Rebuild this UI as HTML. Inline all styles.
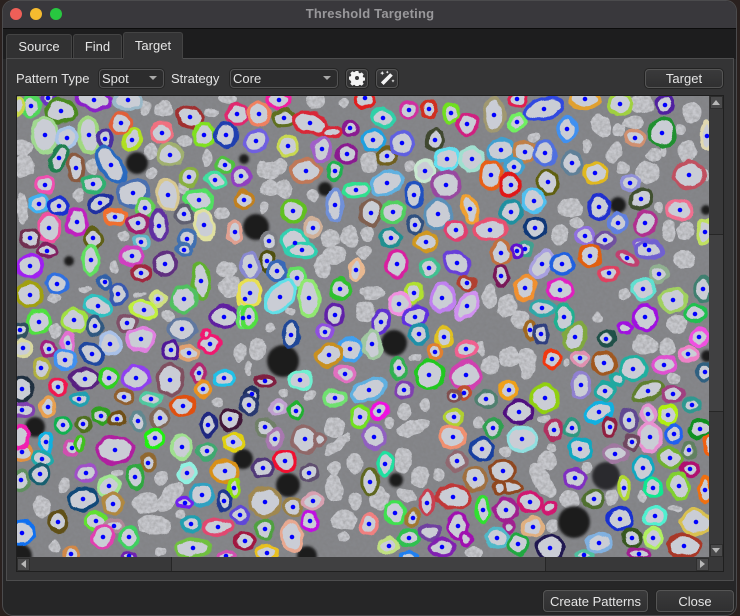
<!DOCTYPE html>
<html><head><meta charset="utf-8"><title>Threshold Targeting</title>
<style>
*{box-sizing:border-box}
html,body{margin:0;padding:0;width:740px;height:616px;overflow:hidden;background:#2a211f;font-family:"Liberation Sans",sans-serif;color:#e2e2e2;font-size:13px}
.a{position:absolute}
#win{left:2px;top:0;width:735px;height:616px;border-radius:11px;background:#262627;border:1px solid #4b4b4d;overflow:hidden}
#tb{left:3px;top:1px;width:733px;height:28px;background:#39383c;border-radius:10px 10px 0 0;border-bottom:1px solid #0c0c0c}
#title{left:0;top:6px;width:740px;text-align:center;font-weight:bold;color:#99989b;font-size:13px;letter-spacing:.2px}
.dot{width:12px;height:12px;border-radius:50%;top:8px}
#strip{left:3px;top:29px;width:733px;height:30px;background:#1d1d1e}
.tab{background:#313132;border:1px solid #444;border-bottom:none;border-radius:3px 3px 0 0;text-align:center;top:34px;height:24px;line-height:24px;font-size:13px;color:#e6e6e6}
#panel{left:6px;top:58px;width:728px;height:523px;background:#343435;border:1px solid #4d4d4e}
.btn{background:linear-gradient(#3a3a3b,#303031);border:1px solid #555;border-radius:4px;text-align:center;color:#e6e6e6;box-shadow:0 0 0 1px #232323}
.combo{background:#2c2c2d;border:1px solid #525253;border-radius:4px;height:19px;line-height:17px;top:69px;padding-left:2px;box-shadow:0 0 0 1px #262626}
.arr{position:absolute;right:6px;top:6px;width:0;height:0;border-left:4px solid transparent;border-right:4px solid transparent;border-top:4px solid #a9a9a9}
.lbl{top:70px;line-height:17px}
.sb{background:#383839}
.sbb{background:#4a4a4b;border:1px solid #2e2e2e}
</style></head><body>
<div class="a" id="win"></div>
<div class="a" id="tb"></div>
<div class="a" id="title">Threshold Targeting</div>
<div class="a dot" style="left:10px;background:#ee5f58"></div>
<div class="a dot" style="left:30px;background:#f5bb2f"></div>
<div class="a dot" style="left:50px;background:#28c840"></div>
<div class="a" id="strip"></div>
<div class="a" id="panel"></div>
<div class="a tab" style="left:6px;width:66px">Source</div>
<div class="a tab" style="left:73px;width:49px">Find</div>
<div class="a tab" style="left:123px;width:60px;top:32px;height:27px;background:#343435;border-bottom:1px solid #343435;line-height:26px">Target</div>

<div class="a lbl" style="left:16px">Pattern Type</div>
<div class="a combo" style="left:99px;width:65px">Spot<span class="arr"></span></div>
<div class="a lbl" style="left:171px">Strategy</div>
<div class="a combo" style="left:230px;width:108px">Core<span class="arr"></span></div>
<div class="a btn" style="left:346px;top:69px;width:22px;height:19px"></div>
<svg class="a" style="left:349px;top:70px" width="16" height="16" viewBox="0 0 16 16"><path fill="#f4f4f4" fill-rule="evenodd" d="M6.6 1h2.8l.4 1.9 1.2.5 1.7-1 2 2-1 1.7.5 1.2 1.900.4v2.800l-1.900.4-.5 1.200 1 1.700-2 2-1.700-1-1.200.5-.4 1.900H6.600l-.4-1.900-1.200-.5-1.700 1-2-2 1-1.700-.5-1.200L0 9.400V6.600l1.800-.4.5-1.200-1-1.700 2-2 1.700 1 1.200-.5zM8 6a2 2 0 1 0 0 4 2 2 0 0 0 0-4z"/></svg>
<div class="a btn" style="left:376px;top:69px;width:22px;height:19px"></div>
<svg class="a" style="left:379px;top:70px" width="16" height="16" viewBox="0 0 16 16"><path fill="#f4f4f4" d="M11.200 3.200l2.600 2.400L4.600 15 1.900 12.400zM3.200 1l.7 1.500 1.500.6-1.500.6-.7 1.500-.6-1.500-1.500-.6 1.500-.6zM8.300.6l.5 1 1 .5-1 .5-.5 1-.5-1-1-.5 1-.5zM14 9.300l.5 1.100 1.100.5-1.100.5-.5 1.100-.5-1.100-1.100-.5 1.100-.5z"/></svg>
<div class="a btn" style="left:645px;top:69px;width:78px;height:19px;line-height:17px">Target</div>

<svg class="a" style="left:17px;top:96px" width="692" height="461" viewBox="17 96 692 461">
<defs>
<filter id="w" x="-2%" y="-2%" width="104%" height="104%" color-interpolation-filters="sRGB"><feTurbulence type="fractalNoise" baseFrequency=".08" numOctaves="2" seed="4"/><feDisplacementMap in="SourceGraphic" scale="6" xChannelSelector="R" yChannelSelector="G"/></filter>
<filter id="g" x="0" y="0" width="100%" height="100%"><feTurbulence type="fractalNoise" baseFrequency=".3" numOctaves="2" seed="7"/><feColorMatrix values="0 0 0 0 .2 0 0 0 0 .2 0 0 0 0 .2 .7 0 0 0 -.22"/></filter>
<filter id="b"><feGaussianBlur stdDeviation="1.300"/></filter>
</defs>
<rect x="17" y="96" width="692" height="461" fill="#85868a"/>
<g filter="url(#w)" fill="#c8c9ce">
<ellipse cx="22" cy="148" rx="11" ry="9"/><ellipse cx="24" cy="166" rx="11" ry="11"/><ellipse cx="150" cy="151" rx="6" ry="9"/><ellipse cx="164" cy="109" rx="10" ry="9"/><ellipse cx="145" cy="108" rx="5" ry="8"/><ellipse cx="185" cy="141" rx="7" ry="6"/><ellipse cx="207" cy="158" rx="5" ry="9"/><ellipse cx="152" cy="174" rx="6" ry="6"/><ellipse cx="92" cy="166" rx="6" ry="8"/><ellipse cx="79" cy="195" rx="5" ry="7"/><ellipse cx="22" cy="209" rx="6" ry="16"/><ellipse cx="184" cy="188" rx="5" ry="6"/><ellipse cx="222" cy="213" rx="7" ry="6"/><ellipse cx="124" cy="236" rx="6" ry="6"/><ellipse cx="212" cy="113" rx="7" ry="5"/><ellipse cx="227" cy="99" rx="10" ry="5"/><ellipse cx="315" cy="101" rx="10" ry="9"/><ellipse cx="344" cy="103" rx="5" ry="5"/>
<ellipse cx="270" cy="171" rx="10" ry="9"/><ellipse cx="280" cy="166" rx="7" ry="8"/><ellipse cx="262" cy="169" rx="6" ry="8"/><ellipse cx="270" cy="188" rx="10" ry="8"/><ellipse cx="284" cy="189" rx="8" ry="10"/><ellipse cx="312" cy="195" rx="6" ry="6"/><ellipse cx="369" cy="163" rx="9" ry="11"/><ellipse cx="410" cy="166" rx="6" ry="6"/><ellipse cx="264" cy="208" rx="5" ry="6"/><ellipse cx="349" cy="236" rx="9" ry="11"/><ellipse cx="330" cy="239" rx="10" ry="8"/><ellipse cx="367" cy="234" rx="6" ry="7"/>
<ellipse cx="601" cy="125" rx="9" ry="12" transform="rotate(-25 601 125)"/><ellipse cx="619" cy="130" rx="7" ry="7"/><ellipse cx="634" cy="123" rx="11" ry="6"/><ellipse cx="642" cy="104" rx="12" ry="10"/><ellipse cx="692" cy="113" rx="10" ry="11"/><ellipse cx="681" cy="129" rx="5" ry="6"/><ellipse cx="687" cy="151" rx="10" ry="11"/><ellipse cx="664" cy="151" rx="4" ry="5"/><ellipse cx="615" cy="153" rx="7" ry="11" transform="rotate(20 615 153)"/><ellipse cx="654" cy="155" rx="8" ry="6"/><ellipse cx="587" cy="146" rx="5" ry="7"/><ellipse cx="534" cy="137" rx="6" ry="5"/><ellipse cx="623" cy="168" rx="6" ry="6"/><ellipse cx="647" cy="173" rx="13" ry="11"/><ellipse cx="705" cy="176" rx="3" ry="6"/><ellipse cx="659" cy="207" rx="5" ry="6"/><ellipse cx="570" cy="208" rx="13" ry="10"/><ellipse cx="577" cy="223" rx="7" ry="5"/><ellipse cx="560" cy="234" rx="9" ry="10"/><ellipse cx="669" cy="231" rx="7" ry="11"/><ellipse cx="685" cy="231" rx="8" ry="9"/>
<ellipse cx="227" cy="269" rx="11" ry="8"/><ellipse cx="230" cy="286" rx="11" ry="11"/><ellipse cx="114" cy="267" rx="5" ry="6"/><ellipse cx="85" cy="289" rx="6" ry="3"/><ellipse cx="54" cy="299" rx="7" ry="5"/><ellipse cx="140" cy="294" rx="7" ry="3"/><ellipse cx="167" cy="316" rx="7" ry="6"/><ellipse cx="55" cy="331" rx="6" ry="7"/><ellipse cx="240" cy="353" rx="7" ry="10"/>
<ellipse cx="334" cy="256" rx="12" ry="10"/><ellipse cx="322" cy="266" rx="8" ry="12"/><ellipse cx="364" cy="253" rx="8" ry="7"/><ellipse cx="372" cy="293" rx="13" ry="7"/><ellipse cx="365" cy="312" rx="10" ry="11"/><ellipse cx="290" cy="311" rx="5" ry="4"/><ellipse cx="270" cy="328" rx="5" ry="5"/><ellipse cx="257" cy="349" rx="8" ry="11"/><ellipse cx="249" cy="369" rx="3" ry="8"/><ellipse cx="415" cy="357" rx="6" ry="4"/><ellipse cx="284" cy="393" rx="5" ry="5"/><ellipse cx="310" cy="395" rx="6" ry="5"/>
<ellipse cx="490" cy="296" rx="7" ry="12"/><ellipse cx="507" cy="306" rx="10" ry="11"/><ellipse cx="520" cy="319" rx="9" ry="9"/><ellipse cx="684" cy="259" rx="11" ry="9"/><ellipse cx="597" cy="317" rx="5" ry="5"/><ellipse cx="625" cy="294" rx="5" ry="6"/><ellipse cx="677" cy="324" rx="10" ry="9"/><ellipse cx="644" cy="345" rx="13" ry="10"/><ellipse cx="667" cy="347" rx="9" ry="9"/><ellipse cx="509" cy="357" rx="11" ry="10"/><ellipse cx="527" cy="363" rx="9" ry="16"/><ellipse cx="490" cy="365" rx="9" ry="9"/><ellipse cx="567" cy="363" rx="3" ry="5"/><ellipse cx="480" cy="349" rx="4" ry="8"/><ellipse cx="674" cy="378" rx="6" ry="5"/>
<ellipse cx="335" cy="428" rx="10" ry="10"/><ellipse cx="337" cy="445" rx="17" ry="5" transform="rotate(-40 337 445)"/><ellipse cx="355" cy="463" rx="8" ry="10"/><ellipse cx="335" cy="468" rx="7" ry="7"/><ellipse cx="334" cy="488" rx="9" ry="14" transform="rotate(-10 334 488)"/><ellipse cx="355" cy="502" rx="7" ry="9"/><ellipse cx="344" cy="520" rx="12" ry="10"/><ellipse cx="344" cy="537" rx="6" ry="5"/><ellipse cx="170" cy="497" rx="9" ry="18" transform="rotate(40 170 497)"/><ellipse cx="145" cy="503" rx="13" ry="11"/><ellipse cx="155" cy="525" rx="17" ry="10"/><ellipse cx="42" cy="507" rx="9" ry="11"/><ellipse cx="162" cy="478" rx="6" ry="7"/><ellipse cx="64" cy="485" rx="6" ry="7"/><ellipse cx="55" cy="547" rx="6" ry="6"/><ellipse cx="117" cy="473" rx="6" ry="4"/><ellipse cx="180" cy="515" rx="5" ry="4"/><ellipse cx="160" cy="552" rx="6" ry="5"/><ellipse cx="217" cy="403" rx="6" ry="5"/>
<ellipse cx="414" cy="427" rx="17" ry="8" transform="rotate(-20 414 427)"/><ellipse cx="404" cy="412" rx="7" ry="8"/><ellipse cx="390" cy="423" rx="5" ry="6"/><ellipse cx="425" cy="405" rx="5" ry="7"/><ellipse cx="479" cy="423" rx="6" ry="6"/><ellipse cx="505" cy="451" rx="6" ry="5"/><ellipse cx="403" cy="460" rx="9" ry="13"/><ellipse cx="420" cy="477" rx="9" ry="11"/><ellipse cx="439" cy="475" rx="6" ry="6"/><ellipse cx="379" cy="498" rx="10" ry="11"/><ellipse cx="406" cy="495" rx="11" ry="6" transform="rotate(20 406 495)"/><ellipse cx="542" cy="480" rx="9" ry="20" transform="rotate(-35 542 480)"/><ellipse cx="547" cy="460" rx="10" ry="9"/><ellipse cx="552" cy="447" rx="5" ry="5"/><ellipse cx="570" cy="499" rx="11" ry="9" transform="rotate(25 570 499)"/><ellipse cx="612" cy="497" rx="5" ry="8"/><ellipse cx="642" cy="497" rx="4" ry="6"/><ellipse cx="552" cy="526" rx="6" ry="6"/><ellipse cx="587" cy="468" rx="5" ry="6"/><ellipse cx="674" cy="508" rx="7" ry="3"/><ellipse cx="544" cy="418" rx="7" ry="4"/><ellipse cx="474" cy="553" rx="9" ry="6"/>
</g>
<rect x="17" y="96" width="692" height="461" filter="url(#g)"/>
<g filter="url(#b)" fill="#1d1d1f">
<circle cx="137" cy="163" r="11"/><circle cx="244" cy="159" r="5"/><circle cx="325" cy="189" r="7"/><circle cx="256" cy="227" r="13"/><circle cx="283" cy="361" r="16"/><circle cx="394" cy="343" r="13"/><circle cx="618" cy="205" r="8"/><circle cx="707" cy="356" r="6"/><circle cx="35" cy="427" r="10"/><circle cx="243" cy="459" r="10"/><circle cx="288" cy="485" r="12"/><circle cx="396" cy="480" r="7"/><circle cx="574" cy="522" r="16"/><circle cx="606" cy="476" r="14" fill="#2c2c2e"/><circle cx="69" cy="261" r="5"/><circle cx="20" cy="556" r="12"/><circle cx="307" cy="556" r="10"/><circle cx="706" cy="210" r="5"/>
</g>
<g filter="url(#w)" fill="#cacdd5" stroke-width="3.500">
<ellipse cx="31" cy="106" rx="8" ry="11" stroke="#4fd65a"/><ellipse cx="18" cy="106" rx="5" ry="8" stroke="#c9d94a"/><ellipse cx="48" cy="98" rx="7" ry="6" stroke="#6a35c0"/><ellipse cx="61" cy="111" rx="15" ry="11" stroke="#4a8a20"/><ellipse cx="94" cy="100" rx="18" ry="9" stroke="#8a22c8" transform="rotate(10 94 100)"/><ellipse cx="128" cy="100" rx="14" ry="9" stroke="#9ab8c8"/><ellipse cx="190" cy="117" rx="14" ry="10" stroke="#a03030" transform="rotate(20 190 117)"/><ellipse cx="237" cy="114" rx="10" ry="10" stroke="#e0286f"/><ellipse cx="45" cy="135" rx="13" ry="17" stroke="#a0d890"/><ellipse cx="89" cy="135" rx="10" ry="18" stroke="#a0d880" transform="rotate(-5 89 135)"/><ellipse cx="67" cy="138" rx="10" ry="10" stroke="#a8c4e8"/><ellipse cx="105" cy="139" rx="7" ry="10" stroke="#4a30a0"/><ellipse cx="121" cy="123" rx="10" ry="10" stroke="#e0603a"/><ellipse cx="132" cy="140" rx="8" ry="11" stroke="#b0e020" transform="rotate(20 132 140)"/><ellipse cx="162" cy="133" rx="10" ry="10" stroke="#f07080"/><ellipse cx="204" cy="135" rx="10" ry="11" stroke="#80e020"/><ellipse cx="226" cy="135" rx="11" ry="12" stroke="#2040b0"/><ellipse cx="59" cy="158" rx="7" ry="13" stroke="#208050" transform="rotate(30 59 158)"/><ellipse cx="111" cy="165" rx="10" ry="20" stroke="#2a6abf" transform="rotate(-35 111 165)"/><ellipse cx="76" cy="168" rx="8" ry="14" stroke="#8a5a40" transform="rotate(-5 76 168)"/><ellipse cx="170" cy="155" rx="13" ry="10" stroke="#a0b070"/><ellipse cx="225" cy="165" rx="8" ry="7" stroke="#50c040"/><ellipse cx="241" cy="176" rx="9" ry="10" stroke="#9040c0"/><ellipse cx="93" cy="184" rx="11" ry="8" stroke="#30b070"/><ellipse cx="45" cy="185" rx="9" ry="8" stroke="#f050b0"/><ellipse cx="133" cy="193" rx="16" ry="13" stroke="#4a70b0" transform="rotate(-30 133 193)"/><ellipse cx="189" cy="177" rx="8" ry="9" stroke="#88b040"/><ellipse cx="215" cy="180" rx="10" ry="7" stroke="#40e0a0" transform="rotate(20 215 180)"/><ellipse cx="168" cy="195" rx="11" ry="15" stroke="#d8c890" transform="rotate(-10 168 195)"/><ellipse cx="199" cy="200" rx="14" ry="10" stroke="#50e060" transform="rotate(15 199 200)"/><ellipse cx="244" cy="200" rx="9" ry="9" stroke="#c08020"/><ellipse cx="39" cy="204" rx="9" ry="8" stroke="#40b0f0"/><ellipse cx="59" cy="206" rx="10" ry="8" stroke="#1a30d0"/><ellipse cx="100" cy="203" rx="12" ry="8" stroke="#2030a0" transform="rotate(-20 100 203)"/><ellipse cx="145" cy="208" rx="9" ry="9" stroke="#60d050"/><ellipse cx="115" cy="217" rx="11" ry="7" stroke="#f07030"/><ellipse cx="77" cy="222" rx="10" ry="13" stroke="#c020c0"/><ellipse cx="184" cy="214" rx="8" ry="9" stroke="#606070"/><ellipse cx="138" cy="223" rx="11" ry="8" stroke="#a02070"/><ellipse cx="49" cy="228" rx="10" ry="14" stroke="#f050a0"/><ellipse cx="159" cy="226" rx="8" ry="15" stroke="#6030a0"/><ellipse cx="204" cy="225" rx="10" ry="14" stroke="#e0e0a0" transform="rotate(-20 204 225)"/><ellipse cx="235" cy="232" rx="8" ry="11" stroke="#e0a090"/><ellipse cx="30" cy="238" rx="10" ry="9" stroke="#703050"/><ellipse cx="93" cy="238" rx="9" ry="10" stroke="#606018"/><ellipse cx="141" cy="242" rx="8" ry="7" stroke="#60b8c8"/><ellipse cx="187" cy="239" rx="8" ry="9" stroke="#4070b0"/>
<ellipse cx="279" cy="100" rx="11" ry="8" stroke="#f020a0"/><ellipse cx="365" cy="98" rx="9" ry="10" stroke="#e02020"/><ellipse cx="259" cy="114" rx="11" ry="11" stroke="#f08060"/><ellipse cx="284" cy="118" rx="11" ry="8" stroke="#607020"/><ellipse cx="310" cy="123" rx="17" ry="10" stroke="#d82838" transform="rotate(15 310 123)"/><ellipse cx="332" cy="132" rx="9" ry="5" stroke="#d82838"/><ellipse cx="350" cy="128" rx="7" ry="7" stroke="#8a1a90"/><ellipse cx="383" cy="118" rx="11" ry="8" stroke="#30d0a8" transform="rotate(20 383 118)"/><ellipse cx="409" cy="110" rx="8" ry="8" stroke="#d030a0"/><ellipse cx="429" cy="109" rx="7" ry="8" stroke="#d03020"/><ellipse cx="451" cy="113" rx="7" ry="10" stroke="#70e020"/><ellipse cx="467" cy="124" rx="10" ry="10" stroke="#d02080"/><ellipse cx="373" cy="140" rx="11" ry="10" stroke="#20a0e0"/><ellipse cx="256" cy="141" rx="12" ry="10" stroke="#7060e0" transform="rotate(-30 256 141)"/><ellipse cx="288" cy="146" rx="9" ry="10" stroke="#c8d850"/><ellipse cx="322" cy="149" rx="9" ry="12" stroke="#a060c8"/><ellipse cx="347" cy="154" rx="10" ry="9" stroke="#8a1a90"/><ellipse cx="387" cy="156" rx="10" ry="8" stroke="#706020"/><ellipse cx="402" cy="143" rx="11" ry="11" stroke="#6060e0"/><ellipse cx="435" cy="140" rx="8" ry="11" stroke="#404830" transform="rotate(20 435 140)"/><ellipse cx="447" cy="159" rx="12" ry="11" stroke="#60e0f0"/><ellipse cx="472" cy="159" rx="12" ry="11" stroke="#a0e0d0"/><ellipse cx="306" cy="171" rx="15" ry="11" stroke="#c07858"/><ellipse cx="335" cy="171" rx="7" ry="8" stroke="#20b050"/><ellipse cx="425" cy="171" rx="9" ry="11" stroke="#c8e8d0"/><ellipse cx="387" cy="183" rx="16" ry="11" stroke="#60b0e0" transform="rotate(-25 387 183)"/><ellipse cx="446" cy="185" rx="14" ry="13" stroke="#9848a0"/><ellipse cx="356" cy="190" rx="12" ry="7" stroke="#30e090" transform="rotate(-10 356 190)"/><ellipse cx="414" cy="195" rx="9" ry="12" stroke="#2050c0"/><ellipse cx="293" cy="211" rx="11" ry="11" stroke="#60c020"/><ellipse cx="335" cy="205" rx="8" ry="16" stroke="#7090d8"/><ellipse cx="371" cy="213" rx="10" ry="13" stroke="#806050"/><ellipse cx="393" cy="212" rx="11" ry="11" stroke="#50d060"/><ellipse cx="438" cy="214" rx="13" ry="15" stroke="#5a90b8"/><ellipse cx="470" cy="209" rx="7" ry="14" stroke="#f0a030" transform="rotate(-20 470 209)"/><ellipse cx="415" cy="225" rx="7" ry="9" stroke="#305080"/><ellipse cx="456" cy="230" rx="11" ry="9" stroke="#e04070"/><ellipse cx="313" cy="228" rx="8" ry="9" stroke="#d0b098"/><ellipse cx="391" cy="238" rx="10" ry="8" stroke="#209090"/><ellipse cx="426" cy="242" rx="11" ry="9" stroke="#d09820"/><ellipse cx="295" cy="243" rx="12" ry="14" stroke="#30d0b0" transform="rotate(-35 295 243)"/><ellipse cx="269" cy="241" rx="8" ry="8" stroke="#7c7d82"/>
<ellipse cx="494" cy="115" rx="10" ry="16" stroke="#a09870"/><ellipse cx="517" cy="99" rx="9" ry="7" stroke="#e02050"/><ellipse cx="544" cy="109" rx="20" ry="10" stroke="#3048e0" transform="rotate(-15 544 109)"/><ellipse cx="585" cy="99" rx="15" ry="9" stroke="#e0a030"/><ellipse cx="620" cy="104" rx="11" ry="11" stroke="#a0d040"/><ellipse cx="665" cy="105" rx="8" ry="9" stroke="#5020a0"/><ellipse cx="517" cy="122" rx="8" ry="8" stroke="#70f060"/><ellipse cx="567" cy="129" rx="9" ry="11" stroke="#4090f0"/><ellipse cx="635" cy="138" rx="9" ry="8" stroke="#d09070"/><ellipse cx="662" cy="133" rx="13" ry="14" stroke="#209030"/><ellipse cx="501" cy="150" rx="13" ry="11" stroke="#40a0d0"/><ellipse cx="525" cy="152" rx="11" ry="10" stroke="#c08048"/><ellipse cx="545" cy="153" rx="10" ry="12" stroke="#5070e0"/><ellipse cx="514" cy="167" rx="9" ry="8" stroke="#40a0d0"/><ellipse cx="572" cy="163" rx="10" ry="11" stroke="#608098"/><ellipse cx="491" cy="175" rx="10" ry="14" stroke="#e86018"/><ellipse cx="595" cy="173" rx="11" ry="10" stroke="#e0b820"/><ellipse cx="689" cy="175" rx="15" ry="13" stroke="#c05060"/><ellipse cx="511" cy="185" rx="10" ry="11" stroke="#e01818"/><ellipse cx="548" cy="182" rx="10" ry="11" stroke="#606010"/><ellipse cx="630" cy="183" rx="9" ry="7" stroke="#9090d8"/><ellipse cx="641" cy="199" rx="12" ry="9" stroke="#405030" transform="rotate(-30 641 199)"/><ellipse cx="599" cy="207" rx="10" ry="12" stroke="#2030d0"/><ellipse cx="534" cy="201" rx="11" ry="11" stroke="#50c0f0"/><ellipse cx="511" cy="212" rx="11" ry="11" stroke="#2090a0"/><ellipse cx="680" cy="210" rx="12" ry="10" stroke="#f07090"/><ellipse cx="618" cy="223" rx="9" ry="9" stroke="#6080e0"/><ellipse cx="645" cy="223" rx="10" ry="12" stroke="#b03090"/><ellipse cx="535" cy="228" rx="10" ry="10" stroke="#103878"/><ellipse cx="490" cy="230" rx="16" ry="10" stroke="#e85070"/><ellipse cx="705" cy="232" rx="8" ry="12" stroke="#c0e060"/><ellipse cx="585" cy="236" rx="9" ry="8" stroke="#9070e0"/><ellipse cx="605" cy="240" rx="10" ry="7" stroke="#7050a0"/><ellipse cx="645" cy="245" rx="12" ry="6" stroke="#8060d0"/><ellipse cx="707" cy="136" rx="5" ry="14" stroke="#e0d8b0"/><ellipse cx="525" cy="249" rx="7" ry="7" stroke="#40a090"/>
<ellipse cx="47" cy="251" rx="9" ry="6" stroke="#802060"/><ellipse cx="30" cy="266" rx="12" ry="11" stroke="#a020f0"/><ellipse cx="91" cy="260" rx="8" ry="14" stroke="#60e060"/><ellipse cx="132" cy="256" rx="11" ry="9" stroke="#d040c0"/><ellipse cx="165" cy="264" rx="11" ry="11" stroke="#603080"/><ellipse cx="141" cy="273" rx="10" ry="8" stroke="#a02840"/><ellipse cx="201" cy="281" rx="8" ry="18" stroke="#60b030" transform="rotate(-5 201 281)"/><ellipse cx="184" cy="250" rx="8" ry="6" stroke="#4070b0"/><ellipse cx="57" cy="284" rx="11" ry="9" stroke="#3070e0" transform="rotate(20 57 284)"/><ellipse cx="105" cy="282" rx="6" ry="6" stroke="#3060a8"/><ellipse cx="118" cy="294" rx="8" ry="10" stroke="#3858b0"/><ellipse cx="30" cy="295" rx="12" ry="12" stroke="#a0a010"/><ellipse cx="158" cy="299" rx="7" ry="7" stroke="#d0e080"/><ellipse cx="184" cy="299" rx="13" ry="13" stroke="#50c060"/><ellipse cx="245" cy="299" rx="7" ry="10" stroke="#e8e050"/><ellipse cx="98" cy="306" rx="14" ry="9" stroke="#30c0c0" transform="rotate(20 98 306)"/><ellipse cx="144" cy="310" rx="13" ry="8" stroke="#c0f040" transform="rotate(15 144 310)"/><ellipse cx="224" cy="317" rx="13" ry="11" stroke="#6020a0"/><ellipse cx="243" cy="318" rx="6" ry="10" stroke="#60e060"/><ellipse cx="74" cy="320" rx="12" ry="12" stroke="#a0e040"/><ellipse cx="39" cy="322" rx="11" ry="11" stroke="#50e040"/><ellipse cx="95" cy="326" rx="7" ry="9" stroke="#305880"/><ellipse cx="127" cy="323" rx="9" ry="8" stroke="#805068"/><ellipse cx="182" cy="329" rx="14" ry="11" stroke="#6078a0"/><ellipse cx="20" cy="330" rx="8" ry="7" stroke="#305060"/><ellipse cx="141" cy="339" rx="14" ry="11" stroke="#e080e0"/><ellipse cx="68" cy="343" rx="6" ry="9" stroke="#e070d0"/><ellipse cx="110" cy="344" rx="11" ry="11" stroke="#a8c0e8"/><ellipse cx="49" cy="349" rx="8" ry="7" stroke="#a02080"/><ellipse cx="23" cy="348" rx="9" ry="8" stroke="#d8d8a0"/><ellipse cx="92" cy="354" rx="12" ry="9" stroke="#2048a0" transform="rotate(30 92 354)"/><ellipse cx="210" cy="344" rx="10" ry="9" stroke="#f01870"/><ellipse cx="205" cy="333" rx="4" ry="5" stroke="#f01870"/><ellipse cx="189" cy="353" rx="9" ry="7" stroke="#e0a070"/><ellipse cx="171" cy="350" rx="8" ry="9" stroke="#501898"/><ellipse cx="65" cy="360" rx="10" ry="10" stroke="#4090f0"/><ellipse cx="41" cy="368" rx="8" ry="10" stroke="#b0b040"/><ellipse cx="136" cy="378" rx="13" ry="11" stroke="#9040f0"/><ellipse cx="170" cy="380" rx="13" ry="15" stroke="#805060"/><ellipse cx="85" cy="379" rx="14" ry="10" stroke="#582080"/><ellipse cx="109" cy="378" rx="9" ry="9" stroke="#30d020"/><ellipse cx="199" cy="373" rx="7" ry="9" stroke="#b02870"/><ellipse cx="224" cy="378" rx="10" ry="7" stroke="#20c0e8"/><ellipse cx="203" cy="389" rx="7" ry="8" stroke="#e89020"/><ellipse cx="22" cy="389" rx="10" ry="12" stroke="#203040"/><ellipse cx="58" cy="387" rx="8" ry="8" stroke="#f01850"/><ellipse cx="79" cy="399" rx="9" ry="6" stroke="#20a0b0"/><ellipse cx="124" cy="397" rx="8" ry="7" stroke="#906030"/><ellipse cx="151" cy="399" rx="10" ry="6" stroke="#50c8a0"/>
<ellipse cx="267" cy="261" rx="6" ry="10" stroke="#505010" transform="rotate(20 267 261)"/><ellipse cx="277" cy="271" rx="9" ry="10" stroke="#3868b8" transform="rotate(25 277 271)"/><ellipse cx="250" cy="266" rx="9" ry="13" stroke="#8888d0"/><ellipse cx="297" cy="278" rx="9" ry="10" stroke="#60e060"/><ellipse cx="302" cy="250" rx="14" ry="7" stroke="#30d0b0"/><ellipse cx="340" cy="289" rx="10" ry="10" stroke="#30c030"/><ellipse cx="356" cy="270" rx="6" ry="10" stroke="#e8b890"/><ellipse cx="397" cy="264" rx="10" ry="13" stroke="#d820a0"/><ellipse cx="429" cy="268" rx="8" ry="10" stroke="#40c090"/><ellipse cx="457" cy="263" rx="14" ry="10" stroke="#6840d8" transform="rotate(30 457 263)"/><ellipse cx="467" cy="283" rx="8" ry="7" stroke="#b04030"/><ellipse cx="250" cy="293" rx="11" ry="13" stroke="#e8e050"/><ellipse cx="280" cy="297" rx="11" ry="19" stroke="#60e0e8" transform="rotate(40 280 297)"/><ellipse cx="309" cy="298" rx="10" ry="18" stroke="#90e870"/><ellipse cx="414" cy="293" rx="9" ry="10" stroke="#b0e030"/><ellipse cx="442" cy="298" rx="12" ry="14" stroke="#c080f0"/><ellipse cx="467" cy="306" rx="9" ry="15" stroke="#d090f0" transform="rotate(40 467 306)"/><ellipse cx="399" cy="304" rx="10" ry="10" stroke="#f090e0"/><ellipse cx="335" cy="315" rx="9" ry="10" stroke="#6020a8"/><ellipse cx="249" cy="317" rx="7" ry="10" stroke="#50e040"/><ellipse cx="415" cy="317" rx="13" ry="9" stroke="#6030e0" transform="rotate(-25 415 317)"/><ellipse cx="381" cy="322" rx="8" ry="12" stroke="#6030d0" transform="rotate(25 381 322)"/><ellipse cx="291" cy="335" rx="8" ry="13" stroke="#204898"/><ellipse cx="325" cy="332" rx="7" ry="7" stroke="#9050e0"/><ellipse cx="419" cy="334" rx="9" ry="10" stroke="#2090a8"/><ellipse cx="444" cy="337" rx="8" ry="9" stroke="#e0c020"/><ellipse cx="350" cy="349" rx="12" ry="11" stroke="#40a0f0"/><ellipse cx="372" cy="344" rx="9" ry="14" stroke="#a0c8a0"/><ellipse cx="329" cy="355" rx="13" ry="10" stroke="#c89020" transform="rotate(-20 329 355)"/><ellipse cx="435" cy="352" rx="7" ry="7" stroke="#e08030"/><ellipse cx="466" cy="349" rx="11" ry="8" stroke="#f06090" transform="rotate(-20 466 349)"/><ellipse cx="345" cy="374" rx="10" ry="7" stroke="#e070c0" transform="rotate(25 345 374)"/><ellipse cx="399" cy="368" rx="7" ry="10" stroke="#30b050"/><ellipse cx="429" cy="375" rx="13" ry="14" stroke="#20c820"/><ellipse cx="466" cy="375" rx="15" ry="13" stroke="#d040b0"/><ellipse cx="300" cy="380" rx="12" ry="9" stroke="#70f0d0"/><ellipse cx="265" cy="381" rx="10" ry="5" stroke="#802040"/><ellipse cx="369" cy="390" rx="18" ry="10" stroke="#60b0e0" transform="rotate(-25 369 390)"/><ellipse cx="335" cy="398" rx="11" ry="7" stroke="#70e070"/><ellipse cx="404" cy="390" rx="9" ry="8" stroke="#8040b0"/><ellipse cx="464" cy="393" rx="6" ry="6" stroke="#c05030"/><ellipse cx="454" cy="396" rx="6" ry="6" stroke="#805050"/><ellipse cx="252" cy="394" rx="7" ry="6" stroke="#203060"/>
<ellipse cx="501" cy="253" rx="9" ry="12" stroke="#c07040"/><ellipse cx="517" cy="251" rx="5" ry="7" stroke="#6010d0"/><ellipse cx="542" cy="264" rx="9" ry="15" stroke="#a8a0e0" transform="rotate(30 542 264)"/><ellipse cx="562" cy="264" rx="11" ry="10" stroke="#2060e0"/><ellipse cx="590" cy="256" rx="11" ry="11" stroke="#e06010"/><ellipse cx="649" cy="250" rx="13" ry="9" stroke="#7060d0"/><ellipse cx="627" cy="258" rx="11" ry="5" stroke="#c04070" transform="rotate(30 627 258)"/><ellipse cx="609" cy="273" rx="10" ry="6" stroke="#e04060"/><ellipse cx="659" cy="274" rx="8" ry="9" stroke="#90b090"/><ellipse cx="501" cy="276" rx="7" ry="10" stroke="#781858"/><ellipse cx="525" cy="288" rx="10" ry="12" stroke="#f09030"/><ellipse cx="560" cy="290" rx="12" ry="10" stroke="#e020c0"/><ellipse cx="643" cy="289" rx="11" ry="10" stroke="#60e0d0"/><ellipse cx="673" cy="300" rx="13" ry="11" stroke="#a0d060"/><ellipse cx="703" cy="289" rx="8" ry="12" stroke="#408070"/><ellipse cx="542" cy="308" rx="12" ry="7" stroke="#30a8a8"/><ellipse cx="564" cy="317" rx="9" ry="13" stroke="#20b090"/><ellipse cx="645" cy="317" rx="11" ry="13" stroke="#a010e0"/><ellipse cx="625" cy="328" rx="8" ry="5" stroke="#a010e0"/><ellipse cx="695" cy="314" rx="10" ry="8" stroke="#20c050"/><ellipse cx="530" cy="330" rx="5" ry="8" stroke="#a06820"/><ellipse cx="541" cy="334" rx="7" ry="9" stroke="#304080"/><ellipse cx="575" cy="337" rx="10" ry="14" stroke="#80a840" transform="rotate(30 575 337)"/><ellipse cx="606" cy="339" rx="8" ry="7" stroke="#205048"/><ellipse cx="699" cy="337" rx="8" ry="9" stroke="#f050e0"/><ellipse cx="552" cy="359" rx="8" ry="9" stroke="#f03810"/><ellipse cx="580" cy="358" rx="8" ry="6" stroke="#e090b0"/><ellipse cx="604" cy="363" rx="11" ry="11" stroke="#a05820"/><ellipse cx="633" cy="369" rx="13" ry="12" stroke="#20b0a0"/><ellipse cx="664" cy="365" rx="12" ry="8" stroke="#e050d0"/><ellipse cx="688" cy="354" rx="9" ry="7" stroke="#f080c8"/><ellipse cx="705" cy="372" rx="8" ry="8" stroke="#306080"/><ellipse cx="617" cy="379" rx="6" ry="6" stroke="#20a8a0"/><ellipse cx="605" cy="391" rx="9" ry="8" stroke="#20a8a0"/><ellipse cx="581" cy="385" rx="9" ry="13" stroke="#9080d0"/><ellipse cx="545" cy="398" rx="13" ry="13" stroke="#90d010"/><ellipse cx="509" cy="390" rx="9" ry="8" stroke="#f0a018"/><ellipse cx="486" cy="399" rx="10" ry="8" stroke="#508070"/><ellipse cx="648" cy="391" rx="16" ry="8" stroke="#608030" transform="rotate(-25 648 391)"/><ellipse cx="673" cy="394" rx="11" ry="8" stroke="#a04080"/>
<ellipse cx="22" cy="410" rx="11" ry="7" stroke="#8040b0"/><ellipse cx="48" cy="407" rx="7" ry="10" stroke="#e8a050"/><ellipse cx="183" cy="406" rx="12" ry="9" stroke="#e05010"/><ellipse cx="249" cy="405" rx="8" ry="10" stroke="#283870"/><ellipse cx="278" cy="408" rx="8" ry="7" stroke="#c0a0d0"/><ellipse cx="296" cy="411" rx="7" ry="8" stroke="#20b030"/><ellipse cx="360" cy="417" rx="9" ry="10" stroke="#70e020"/><ellipse cx="101" cy="416" rx="8" ry="7" stroke="#30a020"/><ellipse cx="117" cy="419" rx="8" ry="6" stroke="#705018"/><ellipse cx="138" cy="421" rx="7" ry="9" stroke="#608890"/><ellipse cx="160" cy="418" rx="9" ry="9" stroke="#806858"/><ellipse cx="208" cy="425" rx="7" ry="11" stroke="#202880"/><ellipse cx="230" cy="419" rx="10" ry="10" stroke="#401838"/><ellipse cx="63" cy="425" rx="8" ry="7" stroke="#10b050"/><ellipse cx="83" cy="424" rx="7" ry="8" stroke="#507020"/><ellipse cx="265" cy="427" rx="9" ry="9" stroke="#708068"/><ellipse cx="275" cy="439" rx="8" ry="10" stroke="#a878b0"/><ellipse cx="305" cy="439" rx="13" ry="13" stroke="#906868"/><ellipse cx="320" cy="439" rx="5" ry="7" stroke="#906868"/><ellipse cx="46" cy="442" rx="6" ry="10" stroke="#10b0e0"/><ellipse cx="155" cy="438" rx="9" ry="10" stroke="#20f010"/><ellipse cx="182" cy="447" rx="10" ry="12" stroke="#a0e090"/><ellipse cx="233" cy="442" rx="10" ry="8" stroke="#e0d010"/><ellipse cx="22" cy="452" rx="10" ry="8" stroke="#e09040"/><ellipse cx="20" cy="437" rx="8" ry="12" stroke="#f020b0"/><ellipse cx="72" cy="448" rx="7" ry="7" stroke="#d050b0"/><ellipse cx="80" cy="444" rx="4" ry="7" stroke="#40c020"/><ellipse cx="115" cy="450" rx="18" ry="13" stroke="#b020a0"/><ellipse cx="207" cy="451" rx="9" ry="8" stroke="#40a870"/><ellipse cx="285" cy="461" rx="11" ry="9" stroke="#f01030" transform="rotate(20 285 461)"/><ellipse cx="42" cy="459" rx="10" ry="7" stroke="#20a8a8" transform="rotate(20 42 459)"/><ellipse cx="148" cy="463" rx="7" ry="8" stroke="#906830"/><ellipse cx="263" cy="468" rx="10" ry="9" stroke="#503878"/><ellipse cx="225" cy="471" rx="14" ry="10" stroke="#d89018"/><ellipse cx="86" cy="473" rx="10" ry="8" stroke="#a050c8"/><ellipse cx="187" cy="473" rx="9" ry="9" stroke="#90f0e0"/><ellipse cx="40" cy="474" rx="9" ry="9" stroke="#186070"/><ellipse cx="309" cy="473" rx="8" ry="8" stroke="#605070"/><ellipse cx="135" cy="477" rx="7" ry="12" stroke="#30a840"/><ellipse cx="21" cy="480" rx="8" ry="10" stroke="#609060"/><ellipse cx="109" cy="486" rx="11" ry="10" stroke="#a0e890"/><ellipse cx="202" cy="495" rx="11" ry="11" stroke="#30a0c0"/><ellipse cx="234" cy="488" rx="5" ry="9" stroke="#90e010"/><ellipse cx="224" cy="501" rx="6" ry="9" stroke="#203890"/><ellipse cx="265" cy="502" rx="15" ry="14" stroke="#a08850"/><ellipse cx="293" cy="507" rx="9" ry="9" stroke="#988048"/><ellipse cx="313" cy="501" rx="10" ry="8" stroke="#d8a0b0"/><ellipse cx="83" cy="499" rx="14" ry="11" stroke="#104878"/><ellipse cx="113" cy="504" rx="10" ry="10" stroke="#b08840"/><ellipse cx="185" cy="503" rx="7" ry="5" stroke="#7020f0"/><ellipse cx="240" cy="515" rx="8" ry="8" stroke="#6048d8"/><ellipse cx="310" cy="521" rx="8" ry="9" stroke="#c010e0"/><ellipse cx="58" cy="522" rx="9" ry="11" stroke="#605018"/><ellipse cx="96" cy="521" rx="11" ry="8" stroke="#60e030"/><ellipse cx="114" cy="526" rx="9" ry="6" stroke="#b08898"/><ellipse cx="191" cy="524" rx="9" ry="8" stroke="#20a0b0"/><ellipse cx="218" cy="527" rx="14" ry="8" stroke="#e04870"/><ellipse cx="265" cy="529" rx="8" ry="10" stroke="#50a040"/><ellipse cx="292" cy="537" rx="10" ry="15" stroke="#e8a890" transform="rotate(-15 292 537)"/><ellipse cx="22" cy="533" rx="13" ry="11" stroke="#1070f0"/><ellipse cx="103" cy="537" rx="10" ry="11" stroke="#e040b0"/><ellipse cx="129" cy="537" rx="9" ry="10" stroke="#40d060"/><ellipse cx="245" cy="541" rx="10" ry="8" stroke="#a01840"/><ellipse cx="193" cy="548" rx="17" ry="9" stroke="#70c040"/><ellipse cx="71" cy="554" rx="8" ry="7" stroke="#d08848"/><ellipse cx="129" cy="556" rx="6" ry="4" stroke="#7020b0"/><ellipse cx="226" cy="556" rx="9" ry="4" stroke="#d050b0"/><ellipse cx="267" cy="553" rx="11" ry="7" stroke="#e8c020"/>
<ellipse cx="379" cy="411" rx="8" ry="8" stroke="#f010e0"/><ellipse cx="519" cy="412" rx="13" ry="11" stroke="#501080"/><ellipse cx="599" cy="412" rx="14" ry="9" stroke="#10b0e0" transform="rotate(-20 599 412)"/><ellipse cx="454" cy="417" rx="9" ry="7" stroke="#b0d030"/><ellipse cx="629" cy="420" rx="8" ry="11" stroke="#604890"/><ellipse cx="648" cy="414" rx="7" ry="9" stroke="#e090d0"/><ellipse cx="668" cy="415" rx="9" ry="9" stroke="#b0f010"/><ellipse cx="692" cy="405" rx="8" ry="7" stroke="#309890"/><ellipse cx="572" cy="428" rx="8" ry="8" stroke="#309880"/><ellipse cx="554" cy="430" rx="8" ry="9" stroke="#b03060"/><ellipse cx="610" cy="427" rx="6" ry="9" stroke="#902040"/><ellipse cx="493" cy="428" rx="8" ry="9" stroke="#30a050"/><ellipse cx="374" cy="437" rx="11" ry="12" stroke="#9060c0"/><ellipse cx="453" cy="437" rx="12" ry="11" stroke="#f09070"/><ellipse cx="522" cy="439" rx="15" ry="12" stroke="#90e0e0"/><ellipse cx="650" cy="437" rx="11" ry="14" stroke="#e890d0"/><ellipse cx="674" cy="434" rx="8" ry="9" stroke="#2060f0"/><ellipse cx="700" cy="429" rx="11" ry="8" stroke="#109020" transform="rotate(-20 700 429)"/><ellipse cx="709" cy="445" rx="5" ry="9" stroke="#f06010"/><ellipse cx="632" cy="442" rx="7" ry="7" stroke="#704860"/><ellipse cx="482" cy="449" rx="11" ry="11" stroke="#1840a0"/><ellipse cx="580" cy="449" rx="11" ry="11" stroke="#10a8c0"/><ellipse cx="615" cy="454" rx="12" ry="8" stroke="#a078a0"/><ellipse cx="689" cy="450" rx="7" ry="8" stroke="#608060"/><ellipse cx="670" cy="458" rx="12" ry="9" stroke="#70b030" transform="rotate(20 670 458)"/><ellipse cx="457" cy="461" rx="9" ry="9" stroke="#906870"/><ellipse cx="385" cy="464" rx="7" ry="11" stroke="#20e0a0"/><ellipse cx="643" cy="468" rx="10" ry="12" stroke="#10a8c0"/><ellipse cx="690" cy="469" rx="9" ry="6" stroke="#b01070"/><ellipse cx="503" cy="471" rx="12" ry="11" stroke="#904820"/><ellipse cx="475" cy="479" rx="11" ry="11" stroke="#a07040"/><ellipse cx="575" cy="478" rx="10" ry="9" stroke="#8030c0"/><ellipse cx="624" cy="488" rx="6" ry="11" stroke="#b0d830"/><ellipse cx="653" cy="488" rx="8" ry="9" stroke="#10e890"/><ellipse cx="679" cy="486" rx="10" ry="13" stroke="#80d030" transform="rotate(-15 679 486)"/><ellipse cx="705" cy="490" rx="6" ry="12" stroke="#f07010"/><ellipse cx="370" cy="482" rx="8" ry="13" stroke="#606820"/><ellipse cx="510" cy="487" rx="12" ry="6" stroke="#904820"/><ellipse cx="500" cy="488" rx="6" ry="6" stroke="#904820"/><ellipse cx="453" cy="497" rx="17" ry="11" stroke="#c03838"/><ellipse cx="427" cy="503" rx="7" ry="12" stroke="#c84050"/><ellipse cx="594" cy="499" rx="10" ry="8" stroke="#507030"/><ellipse cx="530" cy="502" rx="11" ry="10" stroke="#d01870"/><ellipse cx="550" cy="508" rx="7" ry="5" stroke="#d01870"/><ellipse cx="483" cy="510" rx="7" ry="12" stroke="#30e030"/><ellipse cx="506" cy="510" rx="11" ry="11" stroke="#a02090"/><ellipse cx="509" cy="527" rx="5" ry="5" stroke="#a02090"/><ellipse cx="395" cy="513" rx="10" ry="11" stroke="#40e050"/><ellipse cx="620" cy="519" rx="12" ry="11" stroke="#1830d0"/><ellipse cx="655" cy="516" rx="11" ry="9" stroke="#50f0d0"/><ellipse cx="696" cy="522" rx="15" ry="12" stroke="#d8c050"/><ellipse cx="413" cy="518" rx="6" ry="8" stroke="#a07830"/><ellipse cx="369" cy="524" rx="8" ry="10" stroke="#f08080"/><ellipse cx="458" cy="526" rx="10" ry="12" stroke="#a010b0"/><ellipse cx="533" cy="527" rx="10" ry="9" stroke="#e0b080"/><ellipse cx="632" cy="538" rx="8" ry="9" stroke="#385820"/><ellipse cx="653" cy="538" rx="9" ry="9" stroke="#b0f060"/><ellipse cx="599" cy="543" rx="13" ry="9" stroke="#80b0e0"/><ellipse cx="684" cy="546" rx="16" ry="11" stroke="#a83828"/><ellipse cx="497" cy="538" rx="11" ry="9" stroke="#50b8c8"/><ellipse cx="550" cy="548" rx="13" ry="13" stroke="#201850"/><ellipse cx="518" cy="544" rx="9" ry="10" stroke="#20a840"/><ellipse cx="409" cy="538" rx="10" ry="8" stroke="#30c050"/><ellipse cx="389" cy="546" rx="9" ry="8" stroke="#c0e080"/><ellipse cx="430" cy="532" rx="10" ry="7" stroke="#7040a0"/><ellipse cx="442" cy="547" rx="12" ry="8" stroke="#8020b0"/><ellipse cx="466" cy="539" rx="6" ry="6" stroke="#a010b0"/><ellipse cx="639" cy="554" rx="10" ry="5" stroke="#a02090"/><ellipse cx="409" cy="557" rx="8" ry="5" stroke="#2080f0"/><ellipse cx="584" cy="555" rx="8" ry="4" stroke="#50c0a0"/>
</g>
<path fill="none" stroke="#0000ff" stroke-width="4.600" stroke-linecap="round" d="M31 106h0M48 98h0M61 111h0M94 100h0M128 100h0M190 117h0M237 114h0M45 135h0M89 135h0M67 138h0M105 139h0M121 123h0M132 140h0M162 133h0M204 135h0M226 135h0M59 158h0M111 165h0M76 168h0M170 155h0M225 165h0M241 176h0M93 184h0M45 185h0M133 193h0M189 177h0M215 180h0M168 195h0M199 200h0M244 200h0M39 204h0M59 206h0M100 203h0M145 208h0M115 217h0M77 222h0M184 214h0M138 223h0M49 228h0M159 226h0M204 225h0M235 232h0M30 238h0M93 238h0M141 242h0M187 239h0M279 100h0M365 98h0M259 114h0M284 118h0M310 123h0M350 128h0M383 118h0M409 110h0M429 109h0M451 113h0M467 124h0M373 140h0M256 141h0M288 146h0M322 149h0M347 154h0M387 156h0M402 143h0M435 140h0M447 159h0M472 159h0M306 171h0M335 171h0M425 171h0M387 183h0M446 185h0M356 190h0M414 195h0M293 211h0M335 205h0M371 213h0M393 212h0M438 214h0M470 209h0M415 225h0M456 230h0M313 228h0M391 238h0M426 242h0M295 243h0M269 241h0M494 115h0M517 99h0M544 109h0M585 99h0M620 104h0M665 105h0M517 122h0M567 129h0M635 138h0M662 133h0M501 150h0M525 152h0M545 153h0M514 167h0M572 163h0M491 175h0M595 173h0M689 175h0M511 185h0M548 182h0M630 183h0M641 199h0M599 207h0M534 201h0M511 212h0M680 210h0M618 223h0M645 223h0M535 228h0M490 230h0M705 232h0M585 236h0M605 240h0M645 245h0M707 136h0M525 249h0M47 251h0M30 266h0M91 260h0M132 256h0M165 264h0M141 273h0M201 281h0M184 250h0M57 284h0M105 282h0M118 294h0M30 295h0M158 299h0M184 299h0M245 299h0M98 306h0M144 310h0M224 317h0M243 318h0M74 320h0M39 322h0M95 326h0M127 323h0M182 329h0M20 330h0M141 339h0M68 343h0M110 344h0M49 349h0M23 348h0M92 354h0M210 344h0M189 353h0M171 350h0M65 360h0M41 368h0M136 378h0M170 380h0M85 379h0M109 378h0M199 373h0M224 378h0M203 389h0M22 389h0M58 387h0M79 399h0M124 397h0M151 399h0M267 261h0M277 271h0M250 266h0M297 278h0M302 250h0M340 289h0M356 270h0M397 264h0M429 268h0M457 263h0M467 283h0M250 293h0M280 297h0M309 298h0M414 293h0M442 298h0M467 306h0M399 304h0M335 315h0M249 317h0M415 317h0M381 322h0M291 335h0M325 332h0M419 334h0M444 337h0M350 349h0M372 344h0M329 355h0M435 352h0M466 349h0M345 374h0M399 368h0M429 375h0M466 375h0M300 380h0M265 381h0M369 390h0M335 398h0M404 390h0M464 393h0M454 396h0M252 394h0M501 253h0M517 251h0M542 264h0M562 264h0M590 256h0M649 250h0M627 258h0M609 273h0M659 274h0M501 276h0M525 288h0M560 290h0M643 289h0M673 300h0M703 289h0M542 308h0M564 317h0M645 317h0M695 314h0M530 330h0M541 334h0M575 337h0M606 339h0M699 337h0M552 359h0M580 358h0M604 363h0M633 369h0M664 365h0M688 354h0M705 372h0M605 391h0M581 385h0M545 398h0M509 390h0M486 399h0M648 391h0M673 394h0M22 410h0M48 407h0M183 406h0M249 405h0M278 408h0M296 411h0M360 417h0M101 416h0M117 419h0M138 421h0M160 418h0M208 425h0M230 419h0M63 425h0M83 424h0M265 427h0M275 439h0M305 439h0M46 442h0M155 438h0M182 447h0M233 442h0M22 452h0M72 448h0M115 450h0M207 451h0M285 461h0M42 459h0M148 463h0M263 468h0M225 471h0M86 473h0M187 473h0M40 474h0M309 473h0M135 477h0M21 480h0M109 486h0M202 495h0M234 488h0M224 501h0M265 502h0M293 507h0M313 501h0M83 499h0M113 504h0M185 503h0M240 515h0M310 521h0M58 522h0M96 521h0M114 526h0M191 524h0M218 527h0M265 529h0M292 537h0M22 533h0M103 537h0M129 537h0M245 541h0M193 548h0M71 554h0M129 556h0M226 556h0M267 553h0M379 411h0M519 412h0M599 412h0M454 417h0M629 420h0M648 414h0M668 415h0M692 405h0M572 428h0M554 430h0M610 427h0M493 428h0M374 437h0M453 437h0M522 439h0M650 437h0M674 434h0M700 429h0M632 442h0M482 449h0M580 449h0M615 454h0M689 450h0M670 458h0M457 461h0M385 464h0M643 468h0M690 469h0M503 471h0M475 479h0M575 478h0M624 488h0M653 488h0M679 486h0M705 490h0M370 482h0M453 497h0M427 503h0M594 499h0M530 502h0M483 510h0M506 510h0M395 513h0M620 519h0M655 516h0M696 522h0M413 518h0M369 524h0M458 526h0M533 527h0M632 538h0M653 538h0M599 543h0M684 546h0M497 538h0M550 548h0M518 544h0M409 538h0M389 546h0M442 547h0M639 554h0M584 555h0"/>
</svg>
<div class="a" style="left:16px;top:95px;width:708px;height:477px;border:1px solid #1f1f1f;pointer-events:none"></div>

<div class="a sb" style="left:709px;top:96px;width:14px;height:475px"></div>
<div class="a" style="left:709px;top:234px;width:14px;height:1px;background:#262626"></div>
<div class="a" style="left:709px;top:411px;width:14px;height:1px;background:#262626"></div>
<div class="a" style="left:709px;top:235px;width:14px;height:176px;background:#404041"></div>
<div class="a sbb" style="left:710px;top:96px;width:13px;height:13px"></div>
<div class="a" style="left:712px;top:100px;width:0;height:0;border-left:4.500px solid transparent;border-right:4.500px solid transparent;border-bottom:5px solid #b8b8b8"></div>
<div class="a sbb" style="left:710px;top:544px;width:13px;height:13px"></div>
<div class="a" style="left:712px;top:548px;width:0;height:0;border-left:4.500px solid transparent;border-right:4.500px solid transparent;border-top:5px solid #b8b8b8"></div>

<div class="a sb" style="left:17px;top:557px;width:692px;height:14px"></div>
<div class="a" style="left:171px;top:557px;width:375px;height:14px;background:#404041;border-left:1px solid #262626;border-right:1px solid #262626"></div>
<div class="a sbb" style="left:17px;top:558px;width:13px;height:13px"></div>
<div class="a" style="left:21px;top:560px;width:0;height:0;border-top:4.500px solid transparent;border-bottom:4.500px solid transparent;border-right:5px solid #b8b8b8"></div>
<div class="a sbb" style="left:696px;top:558px;width:13px;height:13px"></div>
<div class="a" style="left:700px;top:560px;width:0;height:0;border-top:4.500px solid transparent;border-bottom:4.500px solid transparent;border-left:5px solid #b8b8b8"></div>

<div class="a btn" style="left:543px;top:590px;width:105px;height:22px;line-height:21px;font-size:13px">Create Patterns</div>
<div class="a btn" style="left:656px;top:590px;width:78px;height:22px;line-height:21px;font-size:13px">Close</div>
</body></html>
